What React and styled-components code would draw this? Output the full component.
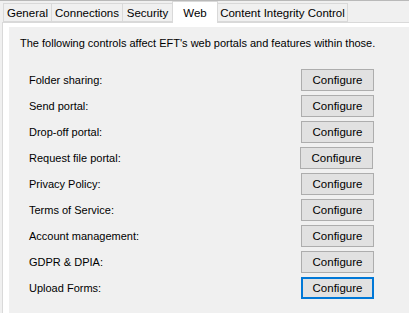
import styled, { createGlobalStyle } from 'styled-components';

const GlobalStyle = createGlobalStyle`
  html, body {
    margin: 0;
    padding: 0;
    background: #f0f0f0;
    overflow: hidden;
  }
  body {
    font-family: 'Liberation Sans', Arial, sans-serif;
    font-size: 11px;
    color: #000;
  }
`;

const Window = styled.div`
  width: 409px;
  height: 313px;
  box-sizing: border-box;
  border-top: 1px solid #b9b9b9;
  display: flex;
  flex-direction: column;
  background: #f0f0f0;
`;

const TabStrip = styled.div`
  display: flex;
  align-items: flex-end;
  height: 21px;
  padding-left: 4px;
`;

const Tab = styled.div`
  box-sizing: border-box;
  width: ${(p) => p.$w}px;
  height: ${(p) => (p.$active ? 22 : 19)}px;
  margin-bottom: ${(p) => (p.$active ? -1 : 0)}px;
  margin-left: -1px;
  position: relative;
  z-index: ${(p) => (p.$active ? 2 : 1)};
  display: flex;
  align-items: center;
  justify-content: center;
  padding-top: ${(p) => (p.$active ? 0 : 1)}px;
  border: 1px solid #d9d9d9;
  border-bottom: ${(p) => (p.$active ? 'none' : '1px solid #d9d9d9')};
  background: ${(p) => (p.$active ? '#ffffff' : '#f0f0f0')};
  font-size: 11.5px;
  white-space: nowrap;
`;

const Panel = styled.div`
  flex: 1;
  margin-left: 2px;
  margin-right: -10px;
  border: 1px solid #d9d9d9;
  border-bottom: none;
  background: #ffffff;
  padding: 4px 0 0 6px;
  display: flex;
`;

const Inner = styled.div`
  flex: 1;
  background: #f0f0f0;
  padding: 8px 0 0 11px;
  display: flex;
  flex-direction: column;
`;

const Intro = styled.div`
  line-height: 16px;
  white-space: nowrap;
  margin-bottom: 16px;
`;

const Row = styled.div`
  display: flex;
  align-items: center;
  height: 26px;
  padding-left: 9px;
`;

const Label = styled.div`
  width: 272px;
  white-space: nowrap;
`;

const Button = styled.button`
  box-sizing: border-box;
  width: 73px;
  height: 22px;
  margin-left: ${(p) => p.$shift || 0}px;
  padding: 0;
  font-family: inherit;
  font-size: 11.5px;
  color: #000;
  background: #e1e1e1;
  border: ${(p) => (p.$focused ? '2px solid #0078d7' : '1px solid #adadad')};
  border-radius: 0;
  outline: none;
`;

const tabs = [
  { name: 'General', w: 49 },
  { name: 'Connections', w: 72 },
  { name: 'Security', w: 51 },
  { name: 'Web', w: 46, active: true },
  { name: 'Content Integrity Control', w: 131 },
];

const rows = [
  { label: 'Folder sharing:' },
  { label: 'Send portal:' },
  { label: 'Drop-off portal:' },
  { label: 'Request file portal:', shift: -1 },
  { label: 'Privacy Policy:' },
  { label: 'Terms of Service:' },
  { label: 'Account management:' },
  { label: 'GDPR & DPIA:' },
  { label: 'Upload Forms:', focused: true },
];

export default function App() {
  return (
    <>
      <GlobalStyle />
      <Window>
        <TabStrip>
          {tabs.map((t) => (
            <Tab key={t.name} $w={t.w} $active={t.active}>
              {t.name}
            </Tab>
          ))}
        </TabStrip>
        <Panel>
          <Inner>
            <Intro>
              The following controls affect EFT&apos;s web portals and features within those.
            </Intro>
            {rows.map((r) => (
              <Row key={r.label}>
                <Label>{r.label}</Label>
                <Button $shift={r.shift} $focused={r.focused}>
                  Configure
                </Button>
              </Row>
            ))}
          </Inner>
        </Panel>
      </Window>
    </>
  );
}
